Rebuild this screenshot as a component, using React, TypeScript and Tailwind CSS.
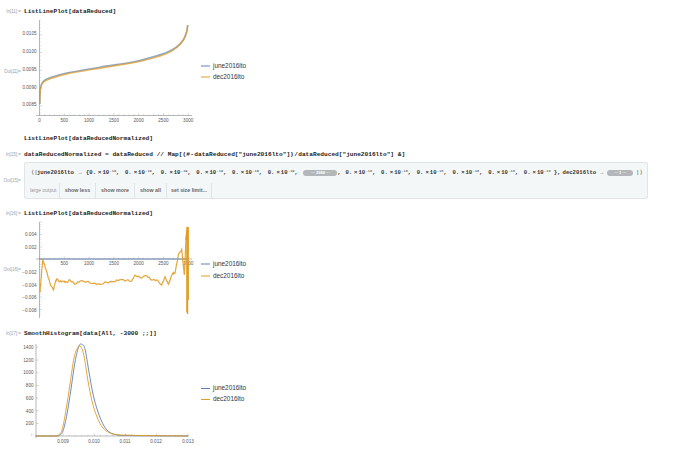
import React from 'react';

const BLUE = '#5e81b5';
const ORANGE = '#e19c24';
const AXIS = '#9a9a9a';
const LABEL = '#555555';

type Pt = [number, number];

// catmull-rom through the read-off points
function smooth(pts: Pt[]) {
  let d = `M${pts[0][0]} ${pts[0][1]}`;
  for (let i = 0; i < pts.length - 1; i++) {
    const p0 = pts[i - 1] || pts[i];
    const p1 = pts[i];
    const p2 = pts[i + 1];
    const p3 = pts[i + 2] || p2;
    const c1x = p1[0] + (p2[0] - p0[0]) / 6;
    const c1y = p1[1] + (p2[1] - p0[1]) / 6;
    const c2x = p2[0] - (p3[0] - p1[0]) / 6;
    const c2y = p2[1] - (p3[1] - p1[1]) / 6;
    d += ` C${c1x.toFixed(2)} ${c1y.toFixed(2)} ${c2x.toFixed(2)} ${c2y.toFixed(2)} ${p2[0]} ${p2[1]}`;
  }
  return d;
}

const range = (n: number, f: (i: number) => number) => Array.from({ length: n }, (_, i) => f(i));

function Label({ children }: { children: React.ReactNode }) {
  return (
    <div className="w-[24px] shrink-0 pr-[3px] text-right text-[4.5px] leading-[8px] text-[#9aa0a6] font-['Liberation_Sans',sans-serif]">
      {children}
    </div>
  );
}

function Code({ children }: { children: React.ReactNode }) {
  return (
    <div className="font-['Liberation_Mono',monospace] font-bold text-[6.15px] leading-[8px] text-[#222] whitespace-pre">
      {children}
    </div>
  );
}

function InputCell({ label, children }: { label?: string; children: React.ReactNode }) {
  return (
    <div className="flex items-center h-[8px]">
      <Label>{label}</Label>
      <Code>{children}</Code>
    </div>
  );
}

function Legend({ soft, gap }: { soft?: boolean; gap: string }) {
  const line = soft ? 'h-[2px] opacity-50' : 'h-[1px]';
  return (
    <div className={`flex flex-col ${gap} font-['Liberation_Sans',sans-serif] text-[6.4px] leading-[8px] text-[#333]`}>
      <div className="flex items-center gap-[3px]">
        <span className={`w-[9px] bg-[#5e81b5] ${line}`} />
        june2016lto
      </div>
      <div className="flex items-center gap-[3px]">
        <span className={`w-[9px] bg-[#e19c24] ${line}`} />
        dec2016lto
      </div>
    </div>
  );
}

function AxisText({ x, y, anchor, children }: { x: number; y: number; anchor: 'middle' | 'end'; children: string }) {
  return (
    <text x={x} y={y} textAnchor={anchor} fontSize="4.6" fill={LABEL} fontFamily="Liberation Sans, sans-serif">
      {children}
    </text>
  );
}

const xTicks = [0, 500, 1000, 1500, 2000, 2500, 3000];
const tickX = (v: number) => 39.5 + (v / 3000) * 148.7;

function Plot1() {
  const blue: Pt[] = [[39.7, 104], [40, 94], [40.7, 87], [43.3, 81.3], [50, 77.8], [66.7, 73], [100, 67.2], [133, 62], [150, 57.8], [166.7, 52.6], [176.7, 47], [183.3, 40], [186.7, 31.7], [187.7, 25]];
  const orange: Pt[] = [[39.7, 104], [40, 94], [40.7, 87.5], [43.3, 82.2], [50, 78.8], [66.7, 74], [100, 68.2], [133, 62.8], [150, 58.9], [166.7, 53.6], [176.7, 47.5], [183.3, 40], [186.7, 31.7], [187.7, 25]];
  const yTicks: [number, string][] = [[33, '0.0105'], [51, '0.0100'], [69, '0.0095'], [87, '0.0090'], [104, '0.0085']];
  return (
    <svg viewBox="24 18 174 107" className="w-[174px] h-[107px] shrink-0 overflow-visible">
      <path d={`M36 115.5H192 M39.5 115.5V20`} stroke={AXIS} strokeWidth="0.7" fill="none" />
      {range(31, (i) => i).map((i) => (
        <path key={i} d={`M${tickX(i * 100)} 115.5v${i % 5 === 0 ? -2.5 : -1.2}`} stroke={AXIS} strokeWidth="0.4" />
      ))}
      {range(27, (i) => i).map((i) => (
        <path key={i} d={`M39.5 ${104 + 17.75 * 0.5 - i * 3.55}h${(i + 3) % 5 === 0 ? 2.5 : 1.2}`} stroke={AXIS} strokeWidth="0.4" />
      ))}
      {yTicks.map(([y, t]) => <AxisText key={t} x={36.5} y={y + 1.6} anchor="end">{t}</AxisText>)}
      {xTicks.map((v) => <AxisText key={v} x={tickX(v)} y={121.5} anchor="middle">{String(v)}</AxisText>)}
      <path d={smooth(blue)} stroke={BLUE} strokeWidth="1.6" strokeOpacity="0.7" fill="none" />
      <path d={smooth(orange)} stroke={ORANGE} strokeWidth="1.4" strokeOpacity="0.75" fill="none" />
    </svg>
  );
}

function Plot2() {
  const raw: Pt[] = [[120, 262], [122, 235], [128, 165], [132, 175], [140, 200], [150, 235], [160, 255], [165, 235], [170, 222], [180, 230], [190, 228], [200, 232], [210, 225], [225, 238], [240, 228], [260, 230], [280, 235], [300, 238], [320, 232], [340, 230], [360, 224], [380, 226], [395, 228], [405, 210], [420, 218], [440, 212], [455, 225], [470, 225], [485, 240], [495, 215], [505, 238], [518, 205], [525, 205], [535, 150], [545, 133], [553, 210], [558, 100], [561, 65]];
  // fine wobble between the read-off points, the real line is noisy
  const pts: string[] = [];
  raw.forEach(([x, y], i) => {
    const next = raw[i + 1];
    const n = next ? 4 : 1;
    for (let k = 0; k < n; k++) {
      const t = k / n;
      const px = next ? x + (next[0] - x) * t : x;
      const py = next ? y + (next[1] - y) * t : y;
      const wob = k === 0 ? 0 : Math.sin(i * 7.3 + k * 2.1) * 0.8;
      pts.push(`${(px / 3).toFixed(1)},${(205 + py / 3 + wob).toFixed(1)}`);
    }
  });
  const yTicks: [number, string][] = [[234.5, '0.004'], [247, '0.002'], [272, '\u22120.002'], [285, '\u22120.004'], [297.5, '\u22120.006'], [310, '\u22120.008']];
  return (
    <svg viewBox="24 220 174 100" className="w-[174px] h-[100px] shrink-0 overflow-visible">
      <path d="M36 259H192 M39.5 318V222" stroke={AXIS} strokeWidth="0.7" fill="none" />
      {range(31, (i) => i).map((i) => (
        <path key={i} d={`M${tickX(i * 100)} 259v${i % 5 === 0 ? -2.5 : -1.2}`} stroke={AXIS} strokeWidth="0.4" />
      ))}
      {range(38, (i) => i).map((i) => (
        <path key={i} d={`M39.5 ${222 + i * 2.5}h${i % 5 === 0 ? 2.5 : 1.2}`} stroke={AXIS} strokeWidth="0.4" />
      ))}
      {yTicks.map(([y, t]) => <AxisText key={t} x={36.5} y={y + 1.6} anchor="end">{t}</AxisText>)}
      {xTicks.slice(1).map((v) => <AxisText key={v} x={tickX(v)} y={265} anchor="middle">{String(v)}</AxisText>)}
      <path d="M39.5 259H188" stroke={BLUE} strokeWidth="1" strokeOpacity="0.85" />
      <polyline points={pts.join(' ')} stroke={ORANGE} strokeWidth="1.2" strokeOpacity="0.9" fill="none" />
      <path d="M186 240L186.8 231V312.5M187.6 314V227M188.3 227V300" stroke={ORANGE} strokeWidth="1.2" fill="none" />
    </svg>
  );
}

function Plot3() {
  const blue: Pt[] = [[36, 436], [55, 436], [59, 435.5], [63, 431], [67, 414], [71, 389], [75, 362], [79, 346], [82, 344.5], [85, 349], [89, 372], [93, 394], [98, 412], [104, 426], [110, 432.5], [118, 435], [130, 435.6], [188, 436]];
  const orange: Pt[] = [[36, 436], [52, 436], [58, 435.2], [62, 430], [66, 410], [70, 384], [74, 358], [78, 347], [81, 347], [84, 356], [88, 381], [92, 401], [97, 417], [103, 428], [110, 433], [118, 434.8], [130, 435.2], [143, 435.5], [188, 436]];
  const yTicks = [[347, '1400'], [360, '1200'], [372.5, '1000'], [385, '800'], [398, '600'], [411, '400'], [423.5, '200']] as [number, string][];
  const labels: [number, string][] = [[63, '0.009'], [94, '0.010'], [125, '0.011'], [156, '0.012'], [188, '0.013']];
  return (
    <svg viewBox="24 340 174 107" className="w-[174px] h-[107px] shrink-0 overflow-visible">
      <path d="M35 436H189 M36 438V344" stroke={AXIS} strokeWidth="0.7" fill="none" />
      {range(26, (i) => i).map((i) => (
        <path key={i} d={`M${63 + (i - 5) * 6.25} 436v${i % 5 === 0 ? -2.5 : -1.2}`} stroke={AXIS} strokeWidth="0.4" />
      ))}
      {range(8, (i) => i).map((i) => (
        <path key={i} d={`M36 ${423.5 - i * 12.7}h2.5`} stroke={AXIS} strokeWidth="0.4" />
      ))}
      {yTicks.map(([y, t]) => <AxisText key={t} x={33.5} y={y + 1.6} anchor="end">{t}</AxisText>)}
      {labels.map(([x, t]) => <AxisText key={t} x={x} y={442.5} anchor="middle">{t}</AxisText>)}
      <path d={smooth(blue)} stroke={BLUE} strokeWidth="1" strokeOpacity="0.9" fill="none" />
      <path d={smooth(orange)} stroke={ORANGE} strokeWidth="1" strokeOpacity="0.9" fill="none" />
    </svg>
  );
}

function Num({ exp, last }: { exp: string; last?: boolean }) {
  return (
    <span className={`inline-flex items-start shrink-0 ${last ? 'w-[30px]' : 'w-[35.7px]'}`}>
      0.<span className="w-[2px]" />×<span className="w-[1px]" />10
      <span className="text-[3.6px] leading-[5px] font-normal pl-[0.5px]">{exp}</span>
      {last ? '' : ','}
    </span>
  );
}

function Pill({ className, children }: { className: string; children: string }) {
  return (
    <span className={`${className} h-[6px] rounded-full bg-[#b4b7ba] text-white text-[4px] leading-[6px] text-center shrink-0 font-['Liberation_Sans',sans-serif]`}>
      {children}
    </span>
  );
}

function OutputBox() {
  const tools: [string, string][] = [['show less', 'w-[36px]'], ['show more', 'w-[39px]'], ['show all', 'w-[32px]'], ['set size limit...', 'w-[45px]']];
  return (
    <div className="w-[624px] h-[37px] rounded-[2px] border border-[#e0e4e6] bg-[#f4f7f8] flex flex-col">
      <div className="h-[21px] flex items-center pl-[6px] font-['Liberation_Mono',monospace] font-bold text-[5.6px] text-[#333] whitespace-pre">
        <span className="w-[6px] font-normal">{'\u27e8|'}</span>
        <span>june2016lto</span>
        <span className="w-[12px] text-center font-normal text-[#777]">→</span>
        <span>{'{'}</span>
        {range(6, (i) => i).map((i) => <Num key={i} exp="-19" />)}
        <Pill className="w-[34px]">··· 2988 ···</Pill>
        <span>,</span>
        <span className="w-[4.6px]" />
        {range(5, (i) => i).map((i) => <Num key={i} exp="-18" />)}
        <Num exp="-18" last />
        <span>{'},'}</span>
        <span className="ml-[2px]">dec2016lto</span>
        <span className="w-[11px] text-center font-normal text-[#777]">→</span>
        <Pill className="w-[26px] mr-[3px]">··· 1 ···</Pill>
        <span className="font-normal">{'|\u27e9'}</span>
      </div>
      <div className="flex-1 flex items-center pl-[5px] font-['Liberation_Sans',sans-serif] text-[5.3px] font-bold text-[#666]">
        <span className="w-[30px] h-[15px] leading-[15px] font-normal text-[5px] text-[#999] border-r border-[#e0e4e6]">large output</span>
        {tools.map(([t, w]) => (
          <span key={t} className={`${w} h-[15px] leading-[15px] text-center border-r border-[#e0e4e6]`}>{t}</span>
        ))}
      </div>
    </div>
  );
}

function OutputCell({ label, children }: { label: string; children: React.ReactNode }) {
  return (
    <div className="flex items-center">
      <Label>{label}</Label>
      {children}
    </div>
  );
}

export default function App() {
  return (
    <div className="w-[690px] h-[466px] bg-white overflow-hidden flex flex-col pt-[8px]">
      <InputCell label="In[11]:=">ListLinePlot[dataReduced]</InputCell>
      <div className="mt-[2px]">
        <OutputCell label="Out[11]=">
          <div className="flex items-center gap-[3px]">
            <Plot1 />
            <Legend soft gap="gap-[3px]" />
          </div>
        </OutputCell>
      </div>
      <div className="mt-[10px]"><InputCell>ListLinePlot[dataReducedNormalized]</InputCell></div>
      <div className="mt-[8px]">
        <InputCell label="In[15]:=">
          {'dataReducedNormalized = dataReduced // Map[(#\u200a-\u200adataReduced["june2016lto"])\u200a/\u200adataReduced["june2016lto"] &]'}
        </InputCell>
      </div>
      <div className="mt-[3px]">
        <OutputCell label="Out[15]="><OutputBox /></OutputCell>
      </div>
      <div className="mt-[11px]"><InputCell label="In[16]:=">ListLinePlot[dataReducedNormalized]</InputCell></div>
      <div className="mt-[2px]">
        <OutputCell label="Out[16]=">
          <div className="flex items-center gap-[3px]">
            <Plot2 />
            <Legend soft gap="gap-[3.5px]" />
          </div>
        </OutputCell>
      </div>
      <div className="mt-[10px]"><InputCell label="In[17]:=">{'SmoothHistogram[data[All, -3000 ;;]]'}</InputCell></div>
      <div className="mt-[2px]">
        <div className="flex">
          <Label>{''}</Label>
          <div className="flex items-center gap-[3px]">
            <Plot3 />
            <Legend gap="gap-[3px]" />
          </div>
        </div>
      </div>
    </div>
  );
}
